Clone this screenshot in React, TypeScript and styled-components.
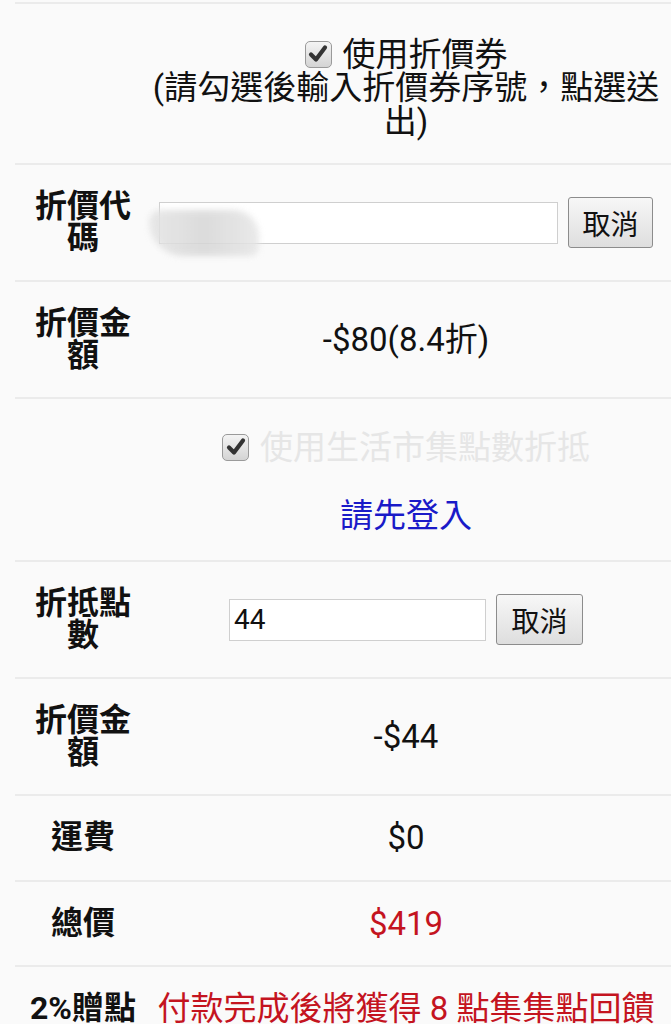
import styled, { createGlobalStyle } from "styled-components";

const GlobalStyle = createGlobalStyle`
  html, body {
    margin: 0;
    padding: 0;
    background: #fafafa;
  }
  body {
    font-family: Roboto, "Noto Sans CJK TC", "Noto Sans", sans-serif;
    color: #111;
  }
`;

function CheckBox() {
  return (
    <Box>
      <svg width="22" height="22" viewBox="0 0 22 22">
        <path
          d="M4 11.5 L9 16.5 L18 4.5"
          fill="none"
          stroke="#333"
          strokeWidth="4.2"
          strokeLinecap="round"
          strokeLinejoin="round"
        />
      </svg>
    </Box>
  );
}

export default function App() {
  return (
    <>
      <GlobalStyle />
      <Table>
        <Row $top={33} $bottom={24}>
          <Label />
          <Value>
            <CheckLine>
              <CheckBox />
              <span>使用折價券</span>
            </CheckLine>
            <Note>(請勾選後輸入折價券序號，點選送出)</Note>
          </Value>
        </Row>

        <Row>
          <Label>折價代碼</Label>
          <Value>
            <InputGroup>
              <InputWrap>
                <TextInput $width={399} defaultValue="" />
                <Redact />
              </InputWrap>
              <CancelButton $width={85}>取消</CancelButton>
            </InputGroup>
          </Value>
        </Row>

        <Row>
          <Label>折價金額</Label>
          <Value>-$80(8.4折)</Value>
        </Row>

        <Row $top={31} $bottom={27}>
          <Label />
          <Value>
            <CheckLine $faded>
              <CheckBox />
              <span>使用生活市集點數折抵</span>
            </CheckLine>
            <LoginLink>請先登入</LoginLink>
          </Value>
        </Row>

        <Row>
          <Label>折抵點數</Label>
          <Value>
            <InputGroup>
              <TextInput $width={257} defaultValue="44" />
              <CancelButton $width={87}>取消</CancelButton>
            </InputGroup>
          </Value>
        </Row>

        <Row>
          <Label>折價金額</Label>
          <Value>-$44</Value>
        </Row>

        <Row>
          <Label>運費</Label>
          <Value>$0</Value>
        </Row>

        <Row>
          <Label>總價</Label>
          <Value $red>$419</Value>
        </Row>

        <Row>
          <Label $nowrap>2%贈點</Label>
          <Value $red $nowrap>
            付款完成後將獲得 8 點集集點回饋
          </Value>
        </Row>
      </Table>
    </>
  );
}

const Table = styled.div`
  padding-top: 2px;
`;

const Row = styled.div<{ $top?: number; $bottom?: number }>`
  display: grid;
  grid-template-columns: 136px 1fr;
  align-items: center;
  margin-left: 15px;
  padding: ${({ $top }) => $top ?? 26}px 10px ${({ $bottom }) => $bottom ?? 26}px 0;
  border-top: 2px solid #ebebeb;
`;

const Label = styled.div<{ $nowrap?: boolean }>`
  font-size: 32px;
  font-weight: 700;
  line-height: 31.5px;
  text-align: center;
  padding: 0 5px;
  white-space: ${({ $nowrap }) => ($nowrap ? "nowrap" : "normal")};
  display: flex;
  justify-content: center;
`;

const Value = styled.div<{ $red?: boolean; $nowrap?: boolean }>`
  font-size: 33px;
  line-height: 31px;
  text-align: center;
  color: ${({ $red }) => ($red ? "#c4141f" : "#111")};
  white-space: ${({ $nowrap }) => ($nowrap ? "nowrap" : "normal")};
  display: flex;
  flex-direction: column;
  align-items: center;
`;

const CheckLine = styled.div<{ $faded?: boolean }>`
  display: flex;
  align-items: center;
  justify-content: center;
  gap: 11px;
  height: 34px;
  font-size: 33px;
  color: ${({ $faded }) => ($faded ? "#e6e6e6" : "#111")};
`;

const Box = styled.span`
  width: 27px;
  height: 27px;
  box-sizing: border-box;
  border: 1.5px solid #9a9a9a;
  border-radius: 5px;
  background: linear-gradient(#f4f4f4, #d4d4d4);
  display: flex;
  align-items: center;
  justify-content: center;
`;

const Note = styled.div`
  font-size: 33px;
  line-height: 34px;
`;

const LoginLink = styled.a`
  margin-top: 34px;
  font-size: 33px;
  line-height: 35px;
  color: #1a1ac8;
  text-decoration: none;
`;

const InputGroup = styled.div`
  display: flex;
  align-items: center;
  gap: 10px;
`;

const InputWrap = styled.div`
  position: relative;
`;

const TextInput = styled.input<{ $width: number }>`
  width: ${({ $width }) => $width}px;
  height: 42px;
  box-sizing: border-box;
  border: 1px solid #cfcfcf;
  background: #fff;
  padding: 0 4px;
  font-family: Roboto, "Noto Sans CJK TC", sans-serif;
  font-size: 28px;
  color: #111;
  outline: none;
  display: block;
`;

const Redact = styled.span`
  position: absolute;
  left: -10px;
  top: 8px;
  width: 110px;
  height: 46px;
  border-radius: 14px 30px 10px 40px;
  background: linear-gradient(90deg, #e4e4e4, #d6d6d6 50%, #e6e6e6);
  filter: blur(3px);
  opacity: 0.85;
`;

const CancelButton = styled.button<{ $width: number }>`
  width: ${({ $width }) => $width}px;
  height: 51px;
  box-sizing: border-box;
  border: 1.5px solid #8c8c8c;
  border-radius: 3px;
  background: linear-gradient(#f7f7f7, #dedede);
  font-family: Roboto, "Noto Sans CJK TC", sans-serif;
  font-size: 28px;
  color: #111;
  padding: 0;
`;
